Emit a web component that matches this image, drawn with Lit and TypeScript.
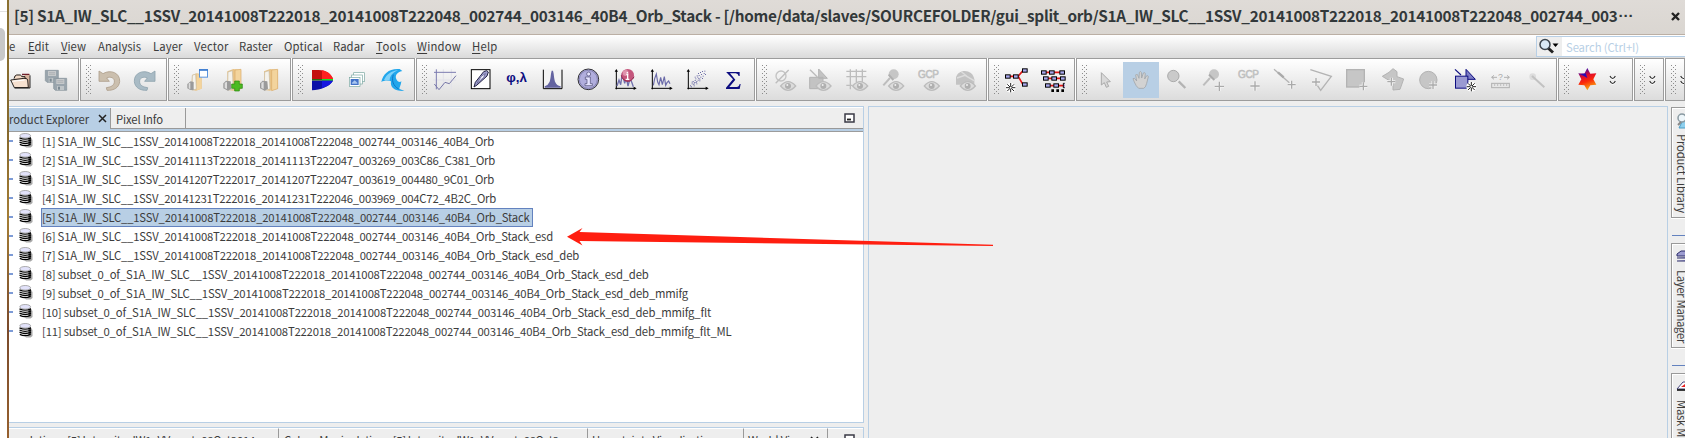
import { LitElement, html, svg, css } from "lit";
import { customElement, property } from "lit/decorators.js";
import { classMap } from "lit/directives/class-map.js";

/** Single-line label whose letter spacing is tuned to fill a given width. */
@customElement("fit-text")
class FitText extends LitElement {
  @property({ type: Number }) width = 0;
  @property() text = "";
  @property({ type: Number }) mnemonic = -1;

  static styles = css`
    :host { display: inline-block; white-space: pre; flex: none; }
    .u { text-decoration: underline; text-underline-offset: 2px; }
  `;

  render() {
    const m = this.mnemonic;
    return m < 0
      ? html`<span class="t">${this.text}</span>`
      : html`<span class="t">${this.text.slice(0, m)}<span class="u">${this.text[m]}</span>${this.text.slice(m + 1)}</span>`;
  }

  updated() {
    const t = this.renderRoot.querySelector(".t") as HTMLElement;
    t.style.letterSpacing = "0";
    const r = t.getBoundingClientRect();
    const w = Math.max(r.width, r.height > 40 ? r.height : 0);
    if (this.width) t.style.letterSpacing = `${(this.width - w) / this.text.length}px`;
  }
}

const eye = (x: number, y: number) => svg`
  <path d="M${x - 22} ${y}Q${x} ${y - 26} ${x + 23} ${y}Q${x} ${y + 26} ${x - 22} ${y}Z" fill="#dcdcdc" stroke="#bcbcbc" stroke-width="4"/>
  <circle cx="${x}" cy="${y}" r="9" fill="#b0b0b0"/><circle cx="${x - 2}" cy="${y - 3}" r="3" fill="#eee"/>`;
const plus = (x: number, y: number, c = "#aaa", r = 12) => svg`
  <path d="M${x - r} ${y}H${x + r}M${x} ${y - r}V${y + r}" stroke="#f4f4f4" stroke-width="9"/>
  <path d="M${x - r} ${y}H${x + r}M${x} ${y - r}V${y + r}" stroke="${c}" stroke-width="4"/>`;
const burst = (x: number, y: number) => svg`
  <circle cx="${x}" cy="${y}" r="15" fill="#fff"/>
  <path d="M${x - 14} ${y}h28M${x} ${y - 14}v28M${x - 10} ${y - 10}l20 20M${x - 10} ${y + 10}l20 -20" stroke="#000" stroke-width="2.6"/>
  <circle cx="${x}" cy="${y}" r="3" fill="#fff"/>`;
const node = (x: number, y: number) => svg`<rect x="${x + 1.5}" y="${y + 1.5}" width="14" height="10" fill="#a9a9ee" stroke="#000" stroke-width="3"/>`;
const axes = (x: number) => svg`
  <path d="M${x} 210V268M${x - 3} 265H${x + 56}" fill="none" stroke="#000" stroke-width="3"/>
  <path d="M${x - 5} 215l5 -8 5 8ZM${x + 52} 260l9 5 -9 5Z" fill="#000"/>`;
const floppy = (x: number, y: number) => svg`
  <path d="M${x} ${y}h39v36h-34l-5 -5Z" fill="#9aa5ad" stroke="#84919a" stroke-width="2"/>
  <rect x="${x + 8}" y="${y + 2}" width="24" height="15" fill="#c6c9cb"/><path d="M${x + 11} ${y + 7}h18M${x + 11} ${y + 12}h18" stroke="#a2a8ac" stroke-width="2"/>
  <rect x="${x + 10}" y="${y + 23}" width="21" height="12" fill="#bfc5c8"/><rect x="${x + 13}" y="${y + 25}" width="6" height="9" fill="#7b8993"/>`;
const binder = (x: number) => svg`
  <path d="M${x + 12} 214l18 -7 23 3v56l-24 6 -17 -3Z" fill="#e9c386"/>
  <path d="M${x + 35} 210l18 -2v58l-18 6Z" fill="#f3d49d" stroke="#d9ab68" stroke-width="2"/>
  <path d="M${x + 14} 216l13 -4 3 55 -17 4Z" fill="#f4f2ec" stroke="#c9bda5" stroke-width="2"/>
  <path d="M${x} 250l8 -8 14 2 2 22 -10 6 -14 -7Z" fill="#9a9a9a"/><path d="M${x + 4} 248l7 -3v22l-7 -3Z" fill="#ddd"/>`;
const chevrons = (x: number) => svg`
  <path d="M${x - 8} 228q3 7 8 7.500q5 -.5 8 -7.500M${x - 8} 243q3 7 8 7.500q5 -.5 8 -7.500" fill="none" stroke="#fff" stroke-width="7"/>
  <path d="M${x - 8} 228q3 7 8 7.500q5 -.5 8 -7.500M${x - 8} 243q3 7 8 7.500q5 -.5 8 -7.500" fill="none" stroke="#333" stroke-width="3.600"/>`;
const gcp = (x: number) => svg`<text x="${x}" y="234" font-size="30" font-family="Liberation Sans" textLength="63" fill="#cfcfcf" stroke="#bababa" stroke-width="1.600">GCP</text>`;

type Tool = { at: number; art: unknown; on?: boolean; w?: number };
type Bar = { width: number; tools: Tool[]; nogrip?: boolean };

const dots = (pts: string) => pts.split(" ").map((p) => {
  const [x, y] = p.split(",");
  return svg`<rect x="${x}" y="${y}" width="3" height="3" fill="#6a6aa6"/>`;
});

const bars: Bar[] = [
  { width: 70, nogrip: true, tools: [
    { at: 6, art: svg`
      <path d="M43 228l6 -4h12l4 4h8v-6h16v42h-42Z" fill="#d9b49e"/><path d="M68 226v-3h20" fill="none" stroke="#70202a" stroke-width="4"/>
      <path d="M42 236l3 -8 5 -3h11l5 5h9v5" fill="#f4dcc8" stroke="#000" stroke-width="2.500"/>
      <path d="M32 240l40 -5 8 1 3 4 2 23H43Z" fill="#f6e0cf" stroke="#000" stroke-width="2.500"/>
      <path d="M37 244l37 -4" stroke="#fff" stroke-width="3"/><path d="M90 226v38H44" fill="none" stroke="#000" stroke-width="2.500"/>` },
    { at: 114, art: svg`${floppy(136, 211)}${floppy(161, 235)}` },
  ]},
  { width: 87, tools: [
    { at: 273, art: svg`<path d="M297 213v31h31l-8 -10c12 -6 25 0 23 13 -2 10 -10 14 -24 16l2 8c22 1 36 -9 38 -26 2 -26 -27 -38 -50 -24Z" fill="#cbbfae" stroke="#ae9f8b" stroke-width="2.500"/>` },
    { at: 381, art: svg`<path d="M465 213v31h-31l8 -10c-12 -6 -25 0 -23 13 2 10 10 14 24 16l-2 8c-22 1 -36 -9 -38 -26 -2 -26 27 -38 50 -24Z" fill="#a9bbc5" stroke="#8fa3ae" stroke-width="2.500"/>` },
  ]},
  { width: 123, tools: [
    { at: 537, art: svg`
      <path d="M576 225l14 -5 15 3v43l-17 6 -14 -3Z" fill="#e9c386"/><path d="M590 222l14 2v42l-14 5Z" fill="#f3d49d"/>
      <path d="M577 226l10 -4 2 45 -13 4Z" fill="#f4f2ec" stroke="#c9bda5" stroke-width="2"/>
      <path d="M562 252l10 -8 9 2v24h-10l-9 -5Z" fill="#9a9a9a"/><path d="M566 250l5 -2v20l-5 -3Z" fill="#ddd"/>
      <rect x="598.500" y="208.500" width="24" height="23" fill="#fff" stroke="#5b94dd" stroke-width="3"/><path d="M597 210h27" stroke="#3f7dd0" stroke-width="5"/>` },
    { at: 645, art: svg`${binder(670)}<path d="M704 243h14v9h9v13h-9v8h-14v-8h-9v-13h9Z" fill="#4dbb22" stroke="#24850e" stroke-width="2"/>` },
    { at: 753, art: binder(780) },
  ]},
  { width: 123, tools: [
    { at: 909, art: svg`
      <path d="M936 210h20c24 0 38 14 43 27h-63Z" fill="#c40f0f"/><path d="M966 211c18 3 28 13 33 26h-33Z" fill="#ff2020"/>
      <path d="M936 237h63v5h-63Z" fill="#2a6b10"/><path d="M966 237h33v5h-33Z" fill="#16e020"/>
      <path d="M936 242h63c-10 18 -38 27 -63 29Z" fill="#0a10a8"/><path d="M966 242h33c-7 12 -18 17 -33 22Z" fill="#1616e0"/>` },
    { at: 1017, art: svg`
      <rect x="1061" y="218" width="32" height="27" fill="#fff" stroke="#77a69f" stroke-width="2"/>
      <rect x="1055" y="225" width="32" height="27" fill="#fff" stroke="#77a69f" stroke-width="2"/>
      <rect x="1048" y="232" width="32" height="27" fill="#fff" stroke="#77a69f" stroke-width="2"/><rect x="1052" y="237" width="24" height="18" fill="#4473c8"/><path d="M1056 248l8 -7 8 7v3h-16Z" fill="#a9c6f0"/>` },
    { at: 1125, art: svg`
      <path d="M1144 246c5 -25 24 -42 55 -39l8 6c-16 3 -24 15 -17 26 4 7 11 9 14 4 -1 16 -10 23 -3 25l12 5c-30 1 -43 -10 -40 -29 -9 -4 -21 -3 -29 2Z" fill="#22a7ec"/>
      <path d="M1152 240c8 -17 22 -27 42 -29 -17 7 -25 18 -25 31 -6 -2 -11 -2 -17 -2Z" fill="#7fd2fa"/><path d="M1180 224c-6 16 -1 34 16 43" fill="none" stroke="#0d76c8" stroke-width="3"/>` },
  ]},
  { width: 339, tools: [
    { at: 21, art: svg`<path d="M70 208v60M94 208v60M40 240h68" stroke="#e2e2ea" stroke-width="3"/><path d="M42 217h66M49 208v60" stroke="#7c7cb0" stroke-width="3"/><path d="M43 252l14 17 18 -22 13 4 10 -12 10 -12" fill="none" stroke="#7676a8" stroke-width="3"/>` },
    { at: 129, art: svg`<rect x="154" y="209" width="56" height="57" fill="#fff" stroke="#000" stroke-width="3"/><path d="M162 261l4 -14 25 -32 9 -3 5 4 -4 12 -30 27Z" fill="#9d9dcc" stroke="#222244" stroke-width="3"/><path d="M171 250l13 -21 12 -8 -5 11Z" fill="#f4f4ff" stroke="#555588" stroke-width="2"/>` },
    { at: 237, art: svg`<text x="259" y="247" font-size="37" font-weight="700" font-family="Liberation Sans" textLength="62" lengthAdjust="spacingAndGlyphs" fill="#0d0d80">φ,λ</text>` },
    { at: 345, art: svg`<path d="M370 209v57h56v-57" fill="#f3f3f3" stroke="#000" stroke-width="3"/><path d="M374 263v-4q10 -2 14 -12q3 -6 5 -26l2 -9h4l2 9q2 20 5 26q4 10 16 12v4Z" fill="#6363a0"/>` },
    { at: 453, art: svg`<circle cx="505" cy="238" r="31" fill="#b1aedd" stroke="#111" stroke-width="2.500"/><circle cx="505" cy="238" r="27" fill="none" stroke="#8784b4" stroke-width="3"/><circle cx="506" cy="222" r="6" fill="#e5e3ff" stroke="#4a4870" stroke-width="2"/><path d="M496 231h15v20h6v6h-22v-6h6v-13h-5Z" fill="#e5e3ff" stroke="#4a4870" stroke-width="2"/>` },
    { at: 561, art: svg`${axes(589)}<path d="M591 258l6 -18 5 14 5 -34 7 30 5 -18 5 26 6 -22 5 10 5 14" fill="none" stroke="#7070ad" stroke-width="4"/><circle cx="623" cy="226" r="19" fill="#c4567c"/><circle cx="617" cy="219" r="9" fill="#df93ad"/><path d="M622 216v4M619 223h4v14M617 238h11" stroke="#fff" stroke-width="4"/><path d="M604 226c3 18 28 27 38 4" fill="none" stroke="#8b2048" stroke-width="3"/>` },
    { at: 669, art: svg`${axes(697)}<path d="M700 256l4 -20 5 -14 4 24 4 8 5 -22 5 22 6 -24 4 26 4 -8 5 -5 4 8" fill="none" stroke="#6b6ba9" stroke-width="3.500"/>` },
    { at: 777, art: svg`${axes(805)}${dots("810,256 815,250 820,252 823,246 818,243 824,240 829,243 833,239 826,235 832,230 838,236 841,230 836,225 843,222 848,227 851,219 840,216 846,213 853,212 855,222 829,250 821,248 827,246 835,234 838,241 846,234 830,226 824,230 815,245 834,219 813,259 821,256")}` },
    { at: 885, art: svg`<path d="M919 216h40v12h-3q-2 -8 -9 -8h-17l16 19 -18 22h22q7 0 9 -9h3l-3 15h-41v-4l21 -25 -20 -21Z" fill="#0d0d80"/>` },
  ]},
  { width: 231, tools: [
    { at: 1041, art: svg`<circle cx="1083" cy="228" r="15" fill="none" stroke="#c3c3c3" stroke-width="4"/><path d="M1067 250l39 -40" stroke="#bdbdbd" stroke-width="4"/>${eye(1104, 258)}` },
    { at: 1149, art: svg`<path d="M1169 232h40v34h-40Z M1196 207l26 28h-26Z" fill="#c3c3c3" stroke="#b4b4b4" stroke-width="3"/><path d="M1170 209l22 22" stroke="#bbb" stroke-width="4"/>${eye(1210, 258)}` },
    { at: -3, art: svg`<path d="M31 208v60M49 208v38M67 208v38M19 214h60M19 230h60M19 256h18" stroke="#bdbdbd" stroke-width="4"/>${eye(60, 258)}` },
    { at: 105, art: svg`<path d="M130 256l20 -22" stroke="#bdbdbd" stroke-width="6"/><circle cx="161" cy="223" r="15" fill="#c6c6c6"/><path d="M146 224l14 16" stroke="#b0b0b0" stroke-width="6"/>${eye(168, 258)}` },
    { at: 213, art: svg`${gcp(234)}${eye(275, 258)}` },
    { at: 321, art: svg`<path d="M348 254v-22c6 -26 50 -27 55 6v16Z" fill="#c3c3c3"/><path d="M351 234l24 -8 27 16M364 215l17 14" fill="none" stroke="#ddd" stroke-width="4"/>${eye(383, 258)}` },
  ]},
  { width: 87, tools: [
    { at: 477, art: svg`<path d="M507 229h30M535 228l14 -16M535 230l14 24" fill="none" stroke="#e01818" stroke-width="5"/>${node(495, 223)}${node(519, 223)}${node(546, 205)}${node(546, 247)}${burst(512, 263)}` },
    { at: 585, art: svg`<path d="M606 217h62M612 235h62M620 257h54" stroke="#e01818" stroke-width="5"/>${node(603, 211)}${node(627, 211)}${node(658, 211)}${node(609, 229)}${node(634, 229)}${node(660, 229)}${node(615, 250)}${node(640, 250)}<path d="M674 250h-4v13h4" fill="#a9a9ee" stroke="#000" stroke-width="3"/><path d="M634 268h8v8h-8ZM649 268h8v8h-8ZM664 268h8v8h-8Z" fill="#000"/>` },
  ]},
  { width: 481, tools: [
    { at: 741, art: svg`<path d="M784 218v37l9 -7 6 14 7 -3 -6 -13 11 -1Z" fill="#d9d9d9" stroke="#aaa" stroke-width="3"/>` },
    { at: 849, on: true, art: svg`<path d="M879 236q4 -4 9 4l2 3 -3 -18q3 -6 6 0l4 10 1 -18q4 -5 6 0l1 17 5 -15q5 -3 6 2l-2 16 5 -9q5 -3 6 2l-5 20q-3 13 -9 15h-15q-8 -6 -13 -19Z" fill="#d2d2d2" stroke="#a2a6aa" stroke-width="2.500"/>` },
    { at: 957, art: svg`<path d="M1016 244l20 20" stroke="#b3b3b3" stroke-width="7"/><circle cx="1000" cy="228" r="17" fill="#cacaca" stroke="#aaa" stroke-width="3"/>` },
    { at: 1065, art: svg`<path d="M1090 256l20 -22" stroke="#bdbdbd" stroke-width="6"/><circle cx="1122" cy="223" r="15" fill="#c6c6c6"/><path d="M1107 224l16 16" stroke="#aaa" stroke-width="6"/>${plus(1138, 259, "#aaa", 14)}` },
    { at: 1173, art: svg`${gcp(1194)}${plus(1245, 258, "#aaa", 14)}` },
    { at: 21, art: svg`<path d="M42 208l46 40" stroke="#b3b3b3" stroke-width="4"/><path d="M54 217l17 15" stroke="#aaa" stroke-width="7"/>${plus(95, 254)}` },
    { at: 129, art: svg`<path d="M151 209l63 20 -32 42 -14 -21" fill="none" stroke="#b3b3b3" stroke-width="4"/>${plus(168, 246)}` },
    { at: 237, art: svg`<rect x="260" y="209" width="53" height="52" fill="#c6c6c6" stroke="#b3b3b3" stroke-width="4"/>${plus(310, 259)}` },
    { at: 345, art: svg`<path d="M367 229l20 -12 12 -11 12 9v15l20 7 -11 31 -21 2v-27l-14 -3Z" fill="#c6c6c6" stroke="#b3b3b3" stroke-width="3"/>${plus(394, 245)}` },
    { at: 453, art: svg`<circle cx="505" cy="240" r="26" fill="#c6c6c6" stroke="#b3b3b3" stroke-width="3"/>${plus(519, 255)}` },
    { at: 561, art: svg`<path d="M618 208v30h28Z" fill="#7c7cc4" stroke="#0d0d80" stroke-width="3"/><rect x="586.500" y="228.500" width="37" height="36" fill="#9a9ad2" stroke="#0d0d80" stroke-width="3"/><path d="M585 208l18 17" stroke="#0d0d80" stroke-width="3.500"/>${burst(634, 260)}` },
    { at: 669, art: svg`<path d="M695 232h16M732 232h16M702 226l-7 6 7 6M741 226l7 6 -7 6" fill="none" stroke="#b0b0b0" stroke-width="3"/><text x="714" y="240" font-size="26" font-family="Liberation Sans" fill="#aaa">?</text><rect x="695" y="250" width="53" height="13" fill="#e6e6e6" stroke="#b0b0b0" stroke-width="3"/><path d="M704 252v6M713 252v6M722 252v6M731 252v6M740 252v6" stroke="#aaa" stroke-width="2"/>` },
    { at: 777, art: svg`<circle cx="818" cy="230" r="10" fill="#ddd"/><path d="M816 228l37 34" stroke="#c2c2c2" stroke-width="6"/>` },
  ]},
  { width: 75, tools: [
    { at: 927, art: svg`<defs><linearGradient id="st" x1="0.300" y1="0" x2="0.600" y2="1"><stop offset="0.080" stop-color="#4b0aa0"/><stop offset="0.350" stop-color="#e00c2c"/><stop offset="0.600" stop-color="#fb2a08"/><stop offset="1" stop-color="#f6b814"/></linearGradient></defs><path d="M982 204l9 17 18 -1 -9 18 9 16 -18 2 -9 15 -9 -15 -18 -2 9 -16 -9 -18 18 1Z" fill="url(#st)"/><path d="M961 222l16 -2 5 14Z" fill="#2a0bb4"/>` },
    { at: 1035, w: 18, art: chevrons(1058) },
  ]},
  { width: 30, tools: [{ at: 1155, w: 18, art: chevrons(1177) }] },
  { width: 20, tools: [{ at: 1248, w: 18, art: chevrons(1270) }] },
];

const menus: [string, number, number, number][] = [
  ["Edit", 0, 29, 20], ["View", 0, 62, 24], ["Analysis", -1, 99, 42], ["Layer", -1, 154, 28.5],
  ["Vector", -1, 195, 33.5], ["Raster", -1, 240, 32.5], ["Optical", -1, 285, 37.5], ["Radar", -1, 334, 30.5],
  ["Tools", 0, 377, 29.5], ["Window", 0, 418, 43], ["Help", 0, 473, 24.5],
];

const rows: [string, number][] = [
  ["[1] S1A_IW_SLC__1SSV_20141008T222018_20141008T222048_002744_003146_40B4_Orb", 453],
  ["[2] S1A_IW_SLC__1SSV_20141113T222018_20141113T222047_003269_003C86_C381_Orb", 454],
  ["[3] S1A_IW_SLC__1SSV_20141207T222017_20141207T222047_003619_004480_9C01_Orb", 453],
  ["[4] S1A_IW_SLC__1SSV_20141231T222016_20141231T222046_003969_004C72_4B2C_Orb", 455],
  ["[5] S1A_IW_SLC__1SSV_20141008T222018_20141008T222048_002744_003146_40B4_Orb_Stack", 488.5],
  ["[6] S1A_IW_SLC__1SSV_20141008T222018_20141008T222048_002744_003146_40B4_Orb_Stack_esd", 512],
  ["[7] S1A_IW_SLC__1SSV_20141008T222018_20141008T222048_002744_003146_40B4_Orb_Stack_esd_deb", 538],
  ["[8] subset_0_of_S1A_IW_SLC__1SSV_20141008T222018_20141008T222048_002744_003146_40B4_Orb_Stack_esd_deb", 607.5],
  ["[9] subset_0_of_S1A_IW_SLC__1SSV_20141008T222018_20141008T222048_002744_003146_40B4_Orb_Stack_esd_deb_mmifg", 647],
  ["[10] subset_0_of_S1A_IW_SLC__1SSV_20141008T222018_20141008T222048_002744_003146_40B4_Orb_Stack_esd_deb_mmifg_flt", 670],
  ["[11] subset_0_of_S1A_IW_SLC__1SSV_20141008T222018_20141008T222048_002744_003146_40B4_Orb_Stack_esd_deb_mmifg_flt_ML", 690.5],
];

const dbIcon = svg`
  <path d="M5 12.500l7 -1V5l1.500 2v6l-2 1.500H7Z" fill="#a8a8a8"/>
  <path d="M.5 3v8q1 2.500 5.500 2.500T12 11V3Z" fill="#fff"/>
  <path d="M.5 4.800q5.500 2.600 11.500 0M.5 7q5.500 2.600 11.500 0M.5 9.200q5.500 2.600 11.500 0M.8 11.300q5.200 2.600 10.800 0" fill="none" stroke="#000" stroke-width="1.300"/>
  <path d="M9.500 4.500H12v7l-2.500 1Z" fill="#000" opacity=".75"/>
  <ellipse cx="6.200" cy="2.800" rx="5.400" ry="2.300" fill="#e2e2fa" stroke="#999" stroke-width=".8"/>`;

@customElement("app-root")
class AppRoot extends LitElement {
  static styles = css`
    :host { display: flex; position: relative; width: 1685px; height: 438px; overflow: hidden; background: #fff;
      font: 11.300px/16px "Noto Sans CJK SC", "Noto Sans", sans-serif; color: #3c3c3c; }
    * { box-sizing: border-box; }
    svg { display: block; flex: none; }
    .edge { flex: none; width: 7px; height: 438px; padding-top: 11px; }
    .edge .line { height: 1px; background: #e2e2e2; }
    .edge .thumb { margin: 16px 2px 0 0; height: 33px; background: #c8c8c8; border-radius: 0 5px 5px 0; }
    .frame { flex: none; width: 2px; background: linear-gradient(#8b7132, #86682c 30%, #a47d35 50%, #7a4a2b 75%, #96602e); }
    .win { flex: 1; min-width: 0; height: 438px; display: flex; flex-direction: column; background: #eee; overflow: hidden; }
    .title { flex: none; height: 35px; display: flex; align-items: center; padding: 0 5px 5px 5px; background: linear-gradient(#dfdbd7, #dad6d1);
      border-bottom: 1px solid #bbafa4; font-size: 15.300px; line-height: 24px; font-weight: 700; color: #32383a; }
    .title .more { font-family: "Liberation Sans", sans-serif; margin-left: 1px; padding-top: 2px; }
    .title .x { margin: 3px 0 0 auto; }
    .menu { flex: none; height: 23px; background: linear-gradient(#fff, #dadada); display: flex; align-items: stretch; }
    .menu .items { flex: 1; display: grid; align-items: center; padding-bottom: 1px; }
    .menu .items fit-text { grid-area: 1/1; }
    .search { width: 149px; height: 21px; margin-top: 1px; border: 1px solid #b8cfe5; border-right: 0; background: #fff; display: flex; align-items: center; color: #b8cfe5; }
    .search .lens { width: 25px; height: 19px; background: #eee; margin-right: 4px; }
    .bars { flex: none; height: 43px; display: flex; gap: 1px; background: #fff; }
    .bar { flex: none; height: 43px; border: 1px solid #9c9c9c; display: flex; padding-top: 3px; overflow: hidden; background: linear-gradient(#fff, #dcdcdc); }
    .bar.nogrip { border-left: 0; }
    .bar.nogrip .btn:first-child { margin-left: -7px; }
    .grip { flex: none; width: 5px; height: 29px; margin: 3px 0 0 5px;
      background: conic-gradient(from 0deg at 1px 1px, transparent 75%, #8c8c8c 0) 0 0 / 4px 4px, conic-gradient(from 0deg at 1px 1px, transparent 75%, #8c8c8c 0) 2px 2px / 4px 4px; }
    .btn { flex: none; width: 36px; height: 36px; }
    .btn.on { background: #b8cfe5; }
    .body { flex: 1; display: flex; padding-top: 5px; min-height: 0; }
    .left { flex: none; width: 855px; display: flex; flex-direction: column; }
    .pane { border-top: 1px solid #b8cfe5; border-right: 1px solid #b8cfe5; display: flex; flex-direction: column; }
    .tabs { flex: none; height: 22px; display: flex; border-top: 1px solid #fff; }
    .tab { height: 21px; display: flex; align-items: center; }
    .tab.sel { width: 102px; background: #b8cfe5; height: 24px; padding-bottom: 2px; border-right: 1px solid #999; overflow: hidden; }
    .tab.sel svg { margin: -1px 0 0 9px; }
    .tab.second { width: 75px; padding: 2px 0 0 5px; border-right: 1px solid #999; border-bottom: 1px solid #999; }
    .rest { flex: 1; border-bottom: 1px solid #999; height: 21px; display: flex; justify-content: flex-end; padding: 5px 8px 0 0; }
    .strip { height: 3px; background: #b8cfe5; border-bottom: 1px solid #9c9c9c; flex: none; }
    .tree { flex: none; height: 291px; background: #fff; border-right: 1px solid #b8cfe5; border-bottom: 1px solid #b8cfe5; }
    .row { height: 19px; display: flex; align-items: center; }
    .row .h { width: 4px; height: 2px; background: #7d9bd6; margin-right: 6px; margin-top: -1px; }
    .row svg { margin-top: -2px; }
    .row .lbl { height: 19px; display: flex; align-items: center; border: 1px solid transparent; padding: 0 2px 2px 0; margin-left: 8px; }
    .row .lbl.sel { background: #b8cfe5; border-color: #6382bf; }
    .lower { margin-top: 4px; height: 11px; overflow: hidden; border: 1px solid #b8cfe5; border-width: 1px 1px 0 0; display: flex; }
    .lower .lt { height: 22px; border-right: 1px solid #999; border-top: 1px solid #fff; padding-top: 3px; overflow: hidden; display: flex; align-items: flex-start; flex: none; }
    .lower .lt svg { margin: 4px 0 0 5px; }
    .lower .end { flex: 1; display: flex; justify-content: flex-end; padding: 5px 8px 0 0; border-top: 1px solid #fff; }
    .editor { flex: none; width: 800px; margin-left: 4px; border: 1px solid #b8cfe5; border-bottom: 0; }
    .side { flex: none; width: 14px; margin-left: 3px; padding-top: 1px; display: flex; flex-direction: column; overflow: hidden; }
    .st { flex: none; width: 22px; border: 1px solid #999; box-shadow: inset 1px 1px #fff, 0 1px #fff; padding: 5px 0 0 4px; }
    .st fit-text { writing-mode: vertical-rl; display: block; width: 16px; margin: 5px 0 0 -2px; }
    .sep { flex: none; height: 1px; background: #6382bf; margin: 17px 0 7px 1px; }
    .arrow { position: absolute; left: 560px; top: 222px; }
  `;

  private bar(b: Bar) {
    return html`<div class=${classMap({ bar: true, nogrip: !!b.nogrip })} style="width:${b.width}px">
      ${b.nogrip ? "" : html`<div class="grip"></div>`}
      ${b.tools.map((t) => html`<svg class=${classMap({ btn: true, on: !!t.on })} style=${t.w ? `width:${t.w}px` : ""} viewBox="${t.at} 186 ${(t.w ?? 36) * 3} 108" fill="none">${t.art}</svg>`)}
    </div>`;
  }

  private winIcon() {
    return html`<svg width="11" height="10" viewBox="0 0 11 10"><rect x="1" y="1" width="9" height="8" fill="#fff" stroke="#3a3a46" stroke-width="1.500"/><path d="M3 6.500h4" stroke="#222" stroke-width="1.800"/></svg>`;
  }
  private cross(s = 9, w = 1.5) {
    return html`<svg width=${s} height=${s} viewBox="0 0 9 9"><path d="M1 1l7 7M8 1l-7 7" stroke="#222" stroke-width=${w}/></svg>`;
  }

  render() {
    return html`
      <div class="edge"><div class="line"></div><div class="thumb"></div></div>
      <div class="frame"></div>
      <div class="win">
        <div class="title">
          <fit-text width="1603.500" text="[5] S1A_IW_SLC__1SSV_20141008T222018_20141008T222048_002744_003146_40B4_Orb_Stack - [/home/data/slaves/SOURCEFOLDER/gui_split_orb/S1A_IW_SLC__1SSV_20141008T222018_20141008T222048_002744_003"></fit-text>
          <fit-text class="more" width="15" text="···"></fit-text>
          <span class="x">${this.cross(9, 2.4)}</span>
        </div>
        <div class="menu">
          <div class="items">
            <fit-text text="e"></fit-text>
            ${menus.map(([t, m, x, w]) => html`<fit-text .text=${t} .mnemonic=${m} .width=${w + 1} style="margin-left:${x - 10}px"></fit-text>`)}
          </div>
          <div class="search">
            <svg class="lens" viewBox="0 0 25 19"><path d="M11 11l5 4.500" stroke="#222" stroke-width="3"/><circle cx="8" cy="7.500" r="5" fill="#d9eaf8" stroke="#3c4650" stroke-width="1.500"/><path d="M15.500 6.500h6l-3 3.500Z" fill="#000"/></svg>
            <fit-text width="73" text="Search (Ctrl+I)"></fit-text>
          </div>
        </div>
        <div class="bars">${bars.map((b) => this.bar(b))}</div>
        <div class="body">
          <div class="left">
            <div class="pane">
              <div class="tabs">
                <div class="tab sel"><fit-text width="80" text="roduct Explorer"></fit-text>${this.cross()}</div>
                <div class="tab second"><fit-text width="47" text="Pixel Info"></fit-text></div>
                <div class="rest">${this.winIcon()}</div>
              </div>
              <div class="strip"></div>
            </div>
            <div class="tree">
              ${rows.map(([t, w], i) => html`<div class="row"><span class="h"></span>
                <svg width="14" height="15" viewBox="0 0 14 15">${dbIcon}</svg>
                <span class=${classMap({ lbl: true, sel: i === 4 })}><fit-text .text=${t} .width=${w - 1}></fit-text></span></div>`)}
            </div>
            <div class="lower">
              <div class="lt" style="width:270px"><fit-text width="246" text="orrelation - [5] Intensity_IW1_VV_mst_08Oct2014"></fit-text></div>
              <div class="lt" style="width:309px;padding-left:5px"><fit-text width="283" text="Colour Manipulation - [5] Intensity_IW1_VV_mst_08Oct2..."></fit-text></div>
              <div class="lt" style="width:156px;padding-left:4px"><fit-text width="124" text="Uncertainty Visualisation"></fit-text></div>
              <div class="lt" style="width:84px;padding-left:4px"><fit-text width="57" text="World View"></fit-text>${this.cross()}</div>
              <div class="end">${this.winIcon()}</div>
            </div>
          </div>
          <div class="editor"></div>
          <div class="side">
            <div class="st" style="height:111px"><svg width="16" height="16" viewBox="0 0 16 16"><path d="M7 7h9v8H3Z" fill="#8fd0ee" stroke="#4a9cc4"/><circle cx="6" cy="5" r="4" fill="#eef6fa" stroke="#8a9aa2" stroke-width="1.500"/><path d="M2 12l3 -3" stroke="#888" stroke-width="2"/></svg><fit-text width="79" text="Product Library"></fit-text></div>
            <div class="sep"></div>
            <div class="st" style="height:105px"><svg width="16" height="16" viewBox="0 0 16 16"><path d="M1 5l4 -3h12v3l-3 2H1ZM1 9h13l3 -2M1 12h13l3 -2" fill="#9c9cd0" stroke="#2c2c6a"/></svg><fit-text width="73" text="Layer Manager"></fit-text></div>
            <div class="sep"></div>
            <div class="st" style="height:105px"><svg width="16" height="16" viewBox="0 0 16 16"><path d="M1 10l6 -7h10v7Z" fill="#fff" stroke="#44447c"/><path d="M5 8l4 -3h8v3Z" fill="#e82020"/><path d="M1 11h15" stroke="#000" stroke-width="1.500"/></svg><fit-text width="72" text="Mask Manager"></fit-text></div>
          </div>
        </div>
      </div>
      <svg class="arrow" width="440" height="34" viewBox="560 222 440 34"><path d="M567 236.700L582.500 228L579.500 232L993 244.800V246L579.500 241L582.500 245.500Z" fill="#ff1e10"/></svg>
    `;
  }
}
